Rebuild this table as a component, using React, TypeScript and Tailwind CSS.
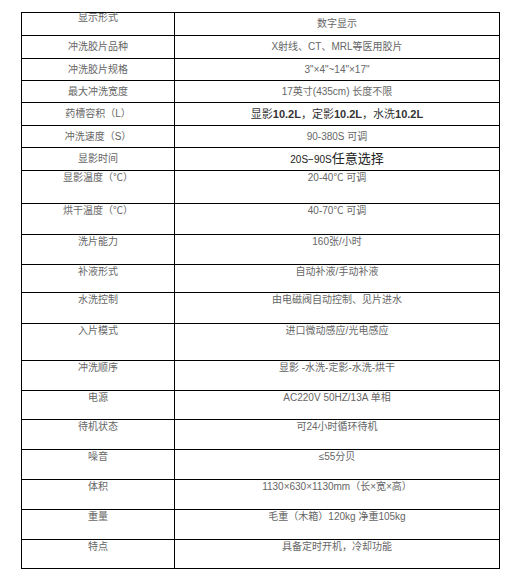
import React from "react";

type Row = {
  h: string;
  left: React.ReactNode;
  right: React.ReactNode;
  mid?: boolean;
  leftTop?: boolean;
};

const rows: Row[] = [
  { h: "h-[23px]", left: "显示形式", right: "数字显示", mid: true, leftTop: true },
  { h: "h-[23px]", left: "冲洗胶片品种", right: "X射线、CT、MRL等医用胶片", mid: true },
  { h: "h-[22px]", left: "冲洗胶片规格", right: "3\"×4\"~14\"×17\"", mid: true },
  { h: "h-[22px]", left: "最大冲洗宽度", right: "17英寸(435cm) 长度不限", mid: true },
  {
    h: "h-[23px]",
    left: "药槽容积（L）",
    right: (
      <span className="text-[11px] text-[#333]">
        显影<b className="font-semibold">10.2L</b>，定影<b className="font-semibold">10.2L</b>，水洗<b className="font-semibold">10.2L</b>
      </span>
    ),
    mid: true,
  },
  { h: "h-[22px]", left: "冲洗速度（S）", right: "90-380S 可调", mid: true },
  {
    h: "h-[23px]",
    left: "显影时间",
    right: (
      <span className="text-[#222]">
        <span className="text-[10px]">20S−90S</span>
        <span className="text-[13px]">任意选择</span>
      </span>
    ),
    mid: true,
  },
  { h: "h-[33px]", left: "显影温度（℃）", right: "20-40℃ 可调" },
  { h: "h-[31px]", left: "烘干温度（℃）", right: "40-70℃ 可调" },
  { h: "h-[30px]", left: "洗片能力", right: "160张/小时" },
  { h: "h-[28px]", left: "补液形式", right: "自动补液/手动补液" },
  { h: "h-[31px]", left: "水洗控制", right: "由电磁阀自动控制、见片进水" },
  { h: "h-[37px]", left: "入片模式", right: "进口微动感应/光电感应" },
  { h: "h-[30px]", left: "冲洗顺序", right: "显影 -水洗-定影-水洗-烘干" },
  { h: "h-[29px]", left: "电源", right: "AC220V 50HZ/13A 单相" },
  { h: "h-[30px]", left: "待机状态", right: "可24小时循环待机" },
  { h: "h-[30px]", left: "噪音", right: "≤55分贝" },
  { h: "h-[30px]", left: "体积", right: "1130×630×1130mm（长×宽×高）" },
  { h: "h-[30px]", left: "重量", right: "毛重（木箱）120kg 净重105kg" },
  { h: "h-[29px]", left: "特点", right: "具备定时开机，冷却功能" },
];

export default function App() {
  return (
    <div
      className="w-[530px] h-[573px] bg-white overflow-hidden pt-[12px] pl-[21px] text-[10px] text-[#666]"
      style={{ fontFamily: "'Liberation Sans', 'Noto Sans CJK SC', sans-serif" }}
    >
      <div className="w-[479px] border-t border-l border-black flex flex-col">
        {rows.map((r, i) => (
          <div key={i} className={`flex ${r.h} border-b border-black`}>
            <div
              className={`w-[153px] shrink-0 border-r border-black flex justify-center text-center ${
                r.leftTop ? "items-start leading-[10px]" : r.mid ? "items-center leading-[14px]" : "items-start leading-[14px]"
              }`}
            >
              <span>{r.left}</span>
            </div>
            <div
              className={`w-[325px] shrink-0 border-r border-black flex justify-center text-center leading-[14px] ${
                r.mid ? "items-center" : "items-start"
              }`}
            >
              <span>{r.right}</span>
            </div>
          </div>
        ))}
      </div>
    </div>
  );
}
